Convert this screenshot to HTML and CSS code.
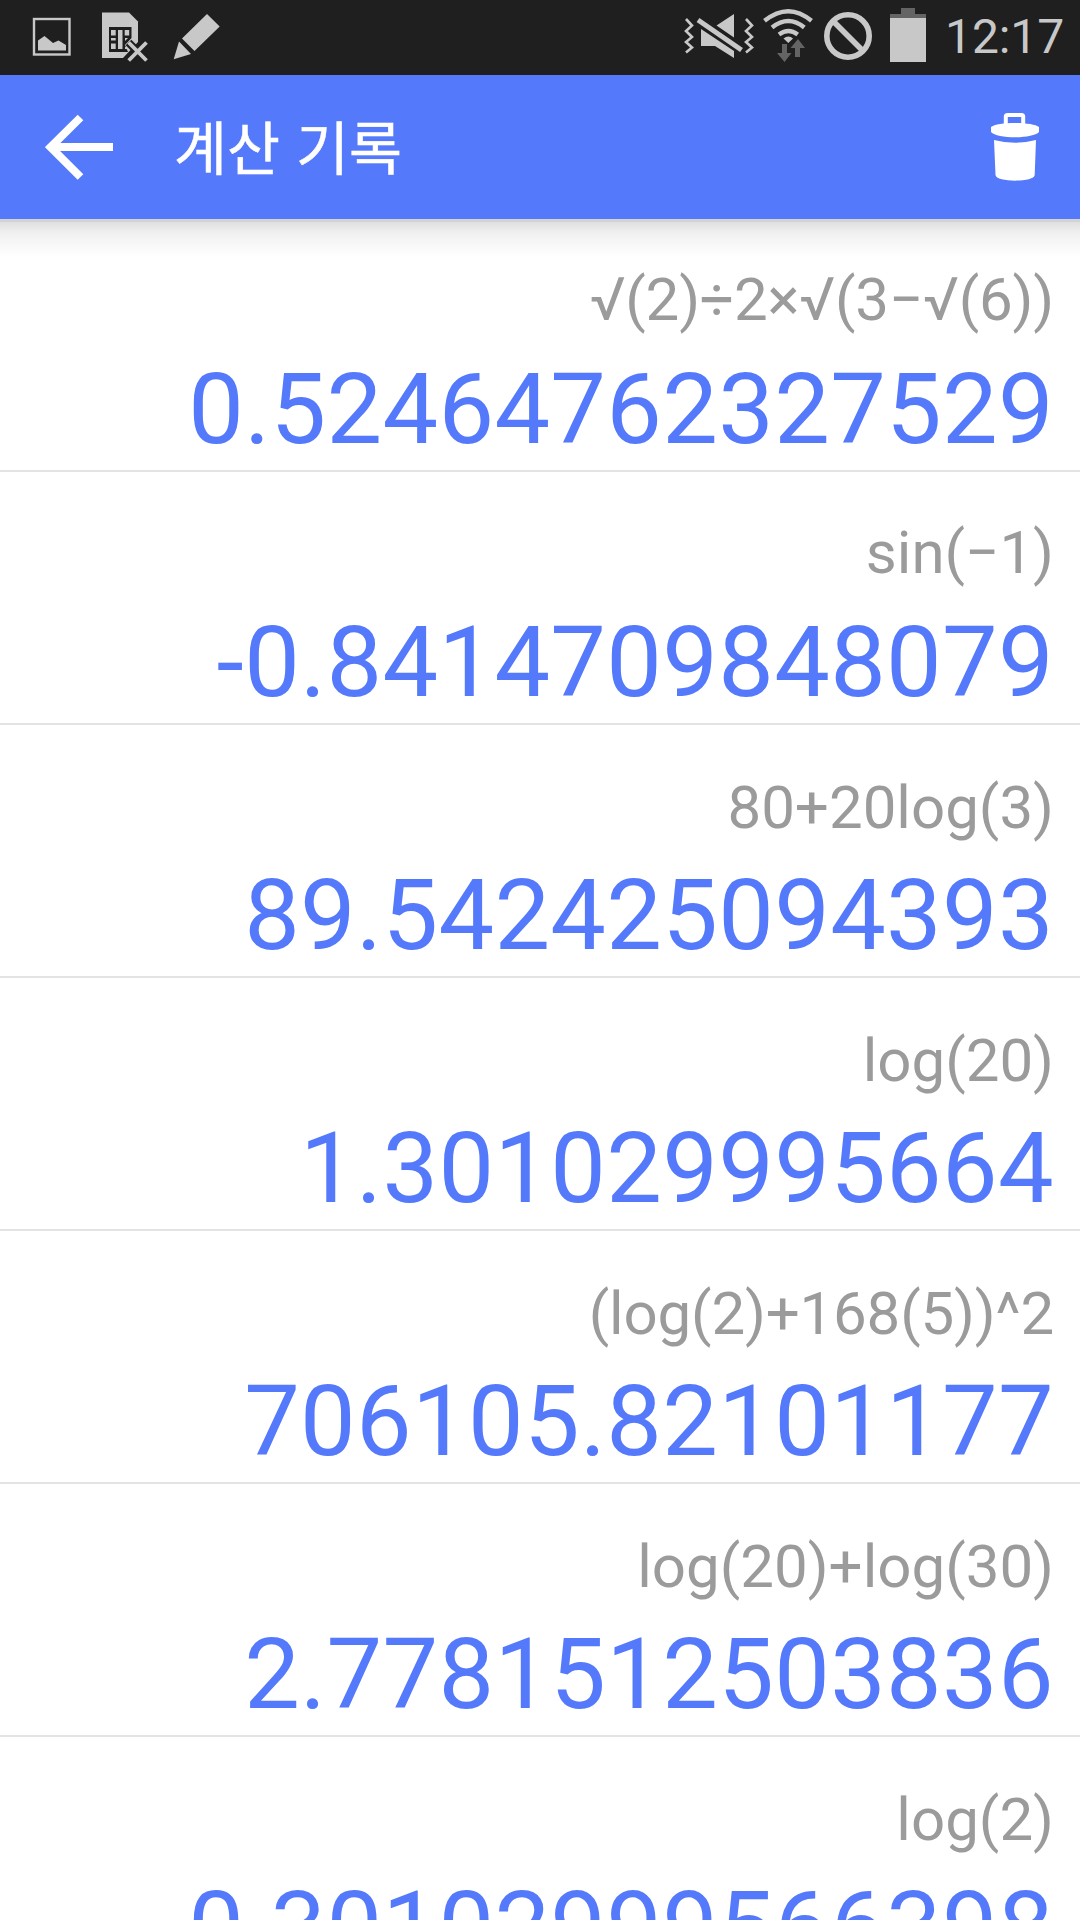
FILE: index.html
```
<!DOCTYPE html>
<html lang="ko">
<head>
<meta charset="utf-8">
<title>계산 기록</title>
<link rel="stylesheet" href="styles.css">
</head>
<body>
<div class="status-bar">
  <svg class="status-left" width="240" height="75" viewBox="0 0 240 75">
    <rect x="34" y="19" width="35.500" height="35.500" fill="none" stroke="#c8c8c8" stroke-width="2.400"/>
    <path d="M38 50.500V40.500L44.500 36L53 43L58.500 40.500L66 45V50.500Z" fill="#c8c8c8"/>
    <path d="M102 12.500H129L138 21.500V42L123 58H102Z" fill="#c8c8c8"/>
    <path d="M109 27H131.500V38L125 45L128 52H109Z" fill="#1f1f1f"/>
    <path d="M111 30h4.700v5.500H111zM111 38h4.700v2.500H111zM111 43.500h4.700V49H111zM118 30h4.500v19H118zM124.700 30h4.500v5.500h-4.500zM125 38h3l-3 3zM125 47h2v2h-2z" fill="#c8c8c8"/>
    <path d="M128.500 42.500L146.500 60.500M146.500 42.500L128.500 60.500" stroke="#1f1f1f" stroke-width="8"/>
    <path d="M128.700 42.500L146.500 60.500M146.500 42.500L128.700 60.500" stroke="#c8c8c8" stroke-width="3.800"/>
    <path d="M207 14L219.700 26.500L194.500 51L182 38.500ZM179 41.500L191 54L173.700 59.300Z" fill="#c8c8c8"/>
  </svg>
  <div class="status-right">
    <svg width="250" height="75" viewBox="680 0 250 75">
      <g fill="none" stroke="#c8c8c8" stroke-width="2.600">
        <path d="M686 19L692 25.500L686 31L692 37L686 42L692 47.500L686 52.500"/>
        <path d="M746 19L752 25.500L746 31L752 37L746 42L752 47.500L746 52.500"/>
      </g>
      <path d="M734 14V37.500L716.500 25.500ZM701 29V46H715L734 58V51Z" fill="#c8c8c8"/>
      <path d="M698 20L741.500 50" stroke="#c8c8c8" stroke-width="5"/>
      <g fill="none" stroke="#c8c8c8" stroke-width="4.400">
        <path d="M764.500 20.800Q788.500 1.500 811.500 20.800"/>
        <path d="M772 27.500Q788.500 14.500 804.300 27.500"/>
        <path d="M779 34.500Q788.500 27.500 797.700 34.500"/>
      </g>
      <path d="M783.500 38.500Q788.500 34.500 793 38.500L788.300 43Z" fill="#c8c8c8"/>
      <path d="M782 44h5v9h4.500L784.500 62L777 53h5zM795 57V48h-4.500L798 39L805 48h-5v9z" fill="#646464"/>
      <circle cx="848" cy="36" r="21.200" fill="none" stroke="#c8c8c8" stroke-width="5.600"/>
      <path d="M833 21L863 51" stroke="#c8c8c8" stroke-width="5.600"/>
      <path d="M901 8h14v6h11v4h-36v-4h11z" fill="#646464"/>
      <path d="M890 18h36v44h-36z" fill="#c8c8c8"/>
    </svg>
    <span class="clock">12:17</span>
  </div>
</div>
<header class="app-bar">
  <svg class="back" width="68" height="66" viewBox="45 114 68 66">
    <path d="M113 147H51M80.500 117.500L50.500 147.200L80.500 177" fill="none" stroke="#fff" stroke-width="8"/>
  </svg>
  <h1 class="title">계산 기록</h1>
  <svg class="trash" width="50" height="70" viewBox="990 111 50 70">
    <path d="M1005.800 123.500V115.500Q1005.800 114 1007.500 114H1021.500Q1023.200 114 1023.200 115.500V123.500" fill="none" stroke="#fff" stroke-width="4"/>
    <path d="M991 126C997 120.500 1033 120.500 1039 126V131C1033 138 997 138 991 131ZM994 139Q1015 144.500 1036 139L1034.700 174C1034.500 181.500 995.800 181.500 995.500 174Z" fill="#fff"/>
  </svg>
</header>
<main class="history">
  <section class="entry raised nested"><div class="expr">√(2)÷2×√(3−√(6))</div><div class="result">0.52464762327529</div></section>
  <section class="entry raised"><div class="expr">sin(−1)</div><div class="result">-0.8414709848079</div></section>
  <section class="entry"><div class="expr">80+20log(3)</div><div class="result">89.542425094393</div></section>
  <section class="entry"><div class="expr">log(20)</div><div class="result">1.301029995664</div></section>
  <section class="entry nested"><div class="expr">(log(2)+168(5))^2</div><div class="result">706105.82101177</div></section>
  <section class="entry"><div class="expr">log(20)+log(30)</div><div class="result">2.7781512503836</div></section>
  <section class="entry"><div class="expr">log(2)</div><div class="result">0.30102999566398</div></section>
</main>
</body>
</html>
```
FILE: styles.css
```
* { box-sizing: border-box; }
body {
  margin: 0;
  width: 1080px;
  height: 1920px;
  overflow: hidden;
  display: flex;
  flex-direction: column;
  background: #fff;
  font-family: Roboto, "Noto Sans CJK KR", sans-serif;
}
svg { display: block; }
.status-bar {
  flex: none;
  height: 75px;
  display: flex;
  justify-content: space-between;
  background: #1f1f1f;
}
.status-right { display: flex; }
.clock {
  width: 150px;
  padding-left: 15px;
  font-size: 48px;
  line-height: 73px;
  letter-spacing: -0.1px;
  color: #c8c8c8;
}
.app-bar {
  flex: none;
  height: 144px;
  display: flex;
  align-items: center;
  padding: 0 40px 0 45px;
  background: #5479fb;
  color: #fff;
}
.title {
  flex: 1;
  margin: 0;
  padding: 0 0 3px 61px;
  font: 400 57.6px/141px "Noto Sans CJK KR", sans-serif;
  -webkit-text-stroke: 0.5px #fff;
}
.history {
  flex: 1;
  min-height: 0;
  overflow: hidden;
  background: linear-gradient(#d3d3d3 0 3px, #e0e0e0 3px, #f0f0f0 14px, #fafafa 28px, #fff 39px) no-repeat 0 0 / 100% 39px;
}
.entry {
  height: 253px;
  padding: 47px 26px 0 0;
  border-bottom: 2px solid #e3e3e3;
  text-align: right;
  white-space: nowrap;
}
.expr {
  height: 83px;
  font-size: 60px;
  line-height: 72px;
  color: #9b9b9b;
}
.raised .expr { position: relative; top: -2px; }
.nested .expr { letter-spacing: -0.17px; }
.result {
  font-size: 99px;
  line-height: 120px;
  letter-spacing: 0.32px;
  color: #5479fb;
}
```
